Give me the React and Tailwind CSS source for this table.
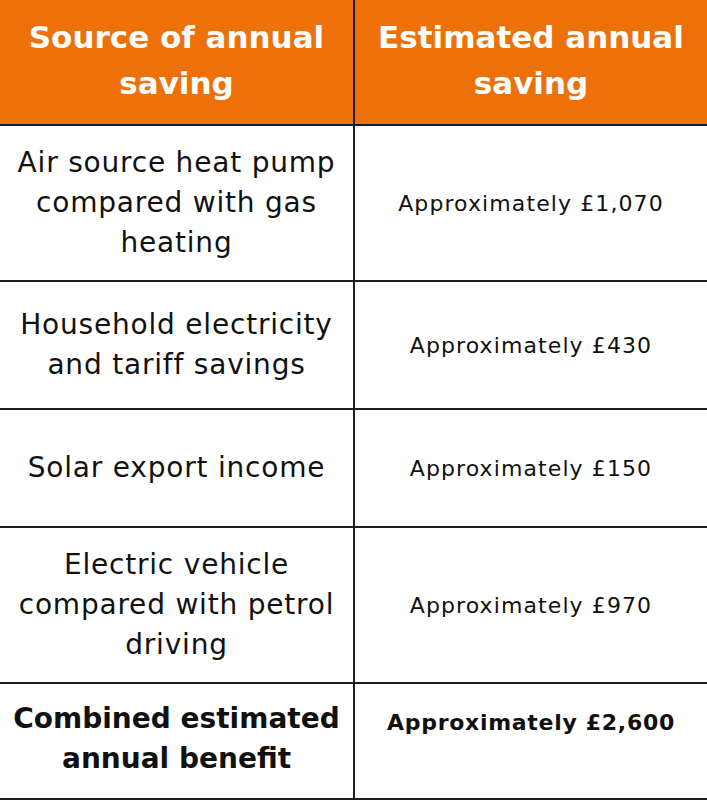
const rows = [
    { source: ['Air source heat pump', 'compared with gas', 'heating'], saving: 'Approximately £1,070', h: 'h-[156px]' },
    { source: ['Household electricity', 'and tariff savings'], saving: 'Approximately £430', h: 'h-[128px]' },
    { source: ['Solar export income'], saving: 'Approximately £150', h: 'h-[118px]' },
    { source: ['Electric vehicle', 'compared with petrol', 'driving'], saving: 'Approximately £970', h: 'h-[156px]' },
]

export default function App() {
    return (
        <div className="w-[707px] h-[802px] bg-white font-['DejaVu_Sans',sans-serif] text-[#111]">
            <div className="grid grid-cols-[355px_352px]">
                {/* Header */}
                <HeaderCell lines={['Source of annual', 'saving']} divider />
                <HeaderCell lines={['Estimated annual', 'saving']} />

                {/* Body rows */}
                {rows.map((row, i) => (
                    <Row key={i} row={row} />
                ))}

                {/* Total */}
                <div className="h-[116px] border-b-2 border-r-2 border-[#1c1c1c] flex flex-col items-center pt-[15px] text-[28px] leading-[40px] font-bold">
                    <span>Combined estimated</span>
                    <span>annual benefit</span>
                </div>
                <div className="h-[116px] border-b-2 border-[#1c1c1c] flex justify-center pt-[21px] text-[22px] leading-[36px] font-bold tracking-[0.7px]">
                    Approximately £2,600
                </div>
            </div>
        </div>
    )
}

function HeaderCell({ lines, divider }) {
    return (
        <div
            className={`h-[126px] bg-[#ee7009] border-b-2 border-[#1c1c1c] flex flex-col items-center justify-center text-white text-[31px] leading-[46px] font-bold pb-[4px] ${divider ? 'border-r-2' : ''}`}
        >
            {lines.map(l => <span key={l}>{l}</span>)}
        </div>
    )
}

function Row({ row }) {
    return (
        <>
            <div className={`${row.h} border-b-2 border-r-2 border-[#1c1c1c] flex flex-col items-center justify-center text-[28px] leading-[40px] tracking-[0.8px]`}>
                {row.source.map(l => <span key={l}>{l}</span>)}
            </div>
            <div className={`${row.h} border-b-2 border-[#1c1c1c] flex items-center justify-center text-[22px] tracking-[1.1px]`}>
                {row.saving}
            </div>
        </>
    )
}
